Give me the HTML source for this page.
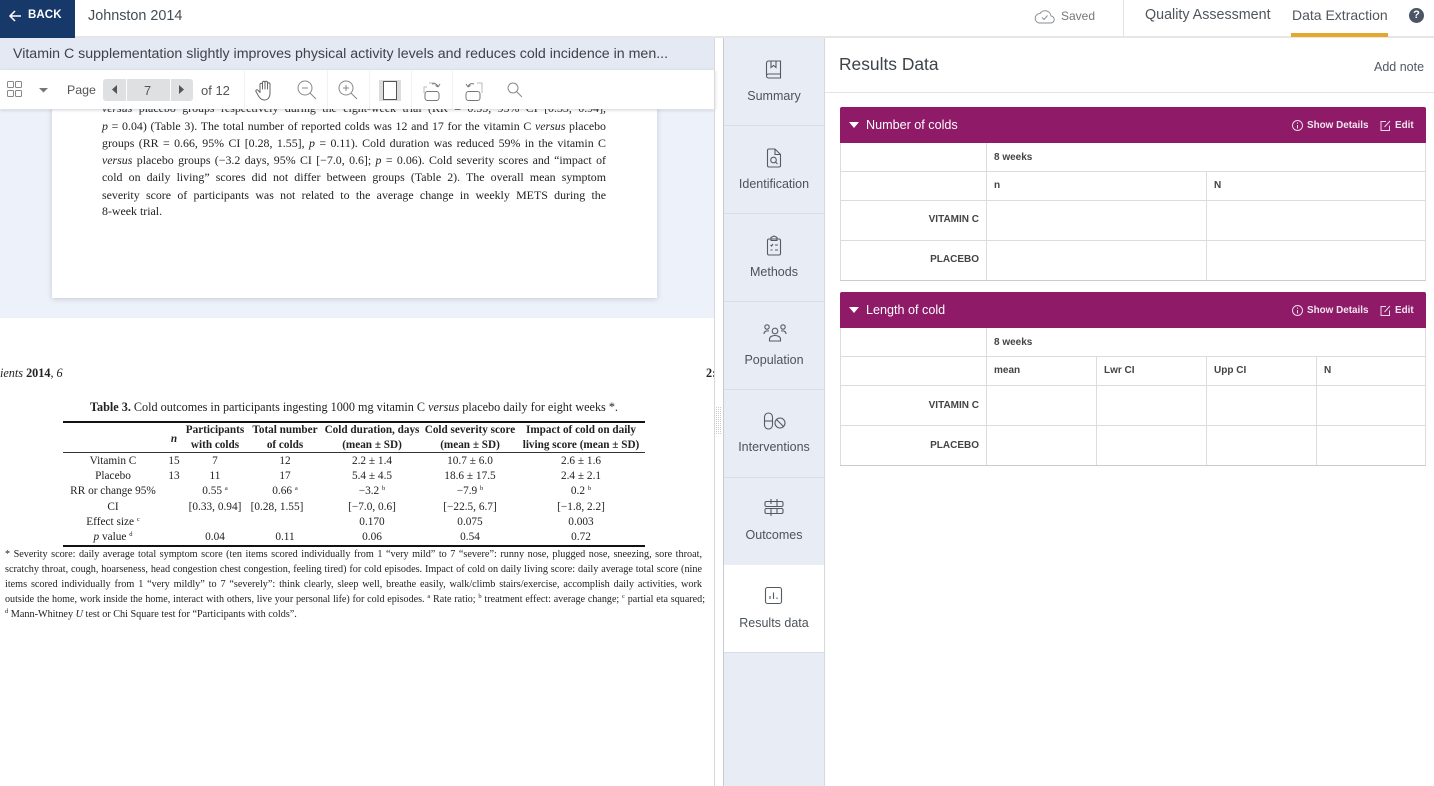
<!DOCTYPE html>
<html><head><meta charset="utf-8"><title>Johnston 2014</title>
<style>
*{box-sizing:border-box}
html,body{margin:0;padding:0;width:1434px;height:786px;overflow:hidden;background:#fff;font-family:"Liberation Sans",sans-serif;color:#444}
.a{position:absolute;white-space:nowrap}
.box{position:absolute}
svg{position:absolute;overflow:visible;fill:none}
.pdf{font-family:"Liberation Serif",serif;color:#222;font-size:11px;line-height:14px;filter:blur(.25px)}
.l{position:absolute;left:102px;width:504px;white-space:normal;text-align:justify;text-align-last:justify;font-size:11.900px;line-height:14px;height:14px}
.c{position:absolute;transform:translateX(-50%);white-space:nowrap;text-align:center;font-size:11.300px}
.f{position:absolute;left:5px;width:700px;white-space:normal;text-align:justify;text-align-last:justify;font-size:10.200px;line-height:14px;height:14px}
.c.th{font-weight:bold;font-size:11.200px}
sup{font-size:6.500px;line-height:0;vertical-align:4px}
.nav{position:absolute;left:724px;width:100px;height:88px;border-bottom:1px solid #d8dde8;text-align:center;font-size:12.500px;color:#4d5359}
.nav span{position:absolute;left:0;right:0;top:51px}
.nav svg{left:40px;top:21px;stroke:#555b61;stroke-width:1.100}
.hd{position:absolute;left:840px;width:586px;height:36px;background:#8e1a68;border-radius:2px 2px 0 0;color:#fff}
.hd .t{position:absolute;left:26px;top:11px;font-size:12.600px;white-space:nowrap}
.hd .s{position:absolute;top:13px;font-size:9.900px;font-weight:bold;white-space:nowrap;color:#f3e6ef}
.hd svg{stroke:#efdbe9;stroke-width:1}
.ln{position:absolute;background:#dcdcdc}
.cell{position:absolute;font-size:10px;font-weight:bold;color:#444;white-space:nowrap}
.lab{position:absolute;width:139px;left:840px;text-align:right;font-size:10px;font-weight:bold;color:#444}
</style></head><body>

<!-- PDF background -->
<div class="box" style="left:0;top:110px;width:714px;height:208px;background:#edf1f9"></div>
<div class="box" style="left:52px;top:100px;width:605px;height:198px;background:#fff;box-shadow:0 1px 5px rgba(120,130,150,.35)"></div>

<div class="pdf">
<div class="l" style="top:101px"><i>versus</i> placebo groups respectively during the eight-week trial (RR = 0.55, 95% CI [0.33, 0.94],</div>
<div class="l" style="top:119px"><i>p</i> = 0.04) (Table 3). The total number of reported colds was 12 and 17 for the vitamin C <i>versus</i> placebo</div>
<div class="l" style="top:136px">groups (RR = 0.66, 95% CI [0.28, 1.55], <i>p</i> = 0.11). Cold duration was reduced 59% in the vitamin C</div>
<div class="l" style="top:153px"><i>versus</i> placebo groups (−3.2 days, 95% CI [−7.0, 0.6]; <i>p</i> = 0.06). Cold severity scores and “impact of</div>
<div class="l" style="top:170px">cold on daily living” scores did not differ between groups (Table 2). The overall mean symptom</div>
<div class="l" style="top:188px">severity score of participants was not related to the average change in weekly METS during the</div>
<div class="a" style="left:102px;top:204px;font-size:11.900px">8-week trial.</div>

<div class="a" style="left:0;top:366px;font-size:12.200px"><i>ients</i> <b>2014</b>, <i>6</i></div>
<div class="a" style="left:706px;top:366px;font-size:12.200px;font-weight:bold">2:</div>
<div class="c" style="left:354px;top:400px;font-size:12.200px"><b>Table 3.</b> Cold outcomes in participants ingesting 1000 mg vitamin C <i>versus</i> placebo daily for eight weeks *.</div>
<div class="box" style="left:63px;top:421px;width:582px;height:2px;background:#111"></div>
<div class="box" style="left:63px;top:452px;width:582px;height:1px;background:#333"></div>
<div class="box" style="left:63px;top:545px;width:582px;height:2px;background:#111"></div>

<div class="c th" style="left:174px;top:432px"><i>n</i></div>
<div class="c th" style="left:215px;top:423px">Participants</div><div class="c th" style="left:215px;top:438px">with colds</div>
<div class="c th" style="left:285px;top:423px">Total number</div><div class="c th" style="left:285px;top:438px">of colds</div>
<div class="c th" style="left:372px;top:423px">Cold duration, days</div><div class="c th" style="left:372px;top:438px">(mean ± SD)</div>
<div class="c th" style="left:470px;top:423px">Cold severity score</div><div class="c th" style="left:470px;top:438px">(mean ± SD)</div>
<div class="c th" style="left:581px;top:423px">Impact of cold on daily</div><div class="c th" style="left:581px;top:438px">living score (mean ± SD)</div>

<div class="c" style="left:113px;top:454px">Vitamin C</div><div class="c" style="left:174px;top:454px">15</div><div class="c" style="left:215px;top:454px">7</div><div class="c" style="left:285px;top:454px">12</div><div class="c" style="left:372px;top:454px">2.2 ± 1.4</div><div class="c" style="left:470px;top:454px">10.7 ± 6.0</div><div class="c" style="left:581px;top:454px">2.6 ± 1.6</div>
<div class="c" style="left:113px;top:469px">Placebo</div><div class="c" style="left:174px;top:469px">13</div><div class="c" style="left:215px;top:469px">11</div><div class="c" style="left:285px;top:469px">17</div><div class="c" style="left:372px;top:469px">5.4 ± 4.5</div><div class="c" style="left:470px;top:469px">18.6 ± 17.5</div><div class="c" style="left:581px;top:469px">2.4 ± 2.1</div>
<div class="c" style="left:113px;top:484px">RR or change 95%</div><div class="c" style="left:215px;top:484px">0.55 <sup>a</sup></div><div class="c" style="left:285px;top:484px">0.66 <sup>a</sup></div><div class="c" style="left:372px;top:484px">−3.2 <sup>b</sup></div><div class="c" style="left:470px;top:484px">−7.9 <sup>b</sup></div><div class="c" style="left:581px;top:484px">0.2 <sup>b</sup></div>
<div class="c" style="left:113px;top:500px">CI</div><div class="c" style="left:215px;top:500px">[0.33, 0.94]</div><div class="c" style="left:277px;top:500px">[0.28, 1.55]</div><div class="c" style="left:372px;top:500px">[−7.0, 0.6]</div><div class="c" style="left:470px;top:500px">[−22.5, 6.7]</div><div class="c" style="left:581px;top:500px">[−1.8, 2.2]</div>
<div class="c" style="left:113px;top:515px">Effect size <sup>c</sup></div><div class="c" style="left:372px;top:515px">0.170</div><div class="c" style="left:470px;top:515px">0.075</div><div class="c" style="left:581px;top:515px">0.003</div>
<div class="c" style="left:113px;top:530px"><i>p</i> value <sup>d</sup></div><div class="c" style="left:215px;top:530px">0.04</div><div class="c" style="left:285px;top:530px">0.11</div><div class="c" style="left:372px;top:530px">0.06</div><div class="c" style="left:470px;top:530px">0.54</div><div class="c" style="left:581px;top:530px">0.72</div>

<div class="f" style="top:548px;width:697px">* Severity score: daily average total symptom score (ten items scored individually from 1 “very mild” to 7 “severe”: runny nose, plugged nose, sneezing, sore throat,</div>
<div class="f" style="top:563px;width:697px">scratchy throat, cough, hoarseness, head congestion chest congestion, feeling tired) for cold episodes. Impact of cold on daily living score: daily average total score (nine</div>
<div class="f" style="top:578px;width:697px">items scored individually from 1 “very mildly” to 7 “severely”: think clearly, sleep well, breathe easily, walk/climb stairs/exercise, accomplish daily activities, work</div>
<div class="f" style="top:593px;font-size:10.100px">outside the home, work inside the home, interact with others, live your personal life) for cold episodes. <sup>a</sup> Rate ratio; <sup>b</sup> treatment effect: average change; <sup>c</sup> partial eta squared;</div>
<div class="a" style="left:5px;top:608px;font-size:10.200px;line-height:14px"><sup>d</sup> Mann-Whitney <i>U</i> test or Chi Square test for “Participants with colds”.</div>
</div>

<!-- Title bar -->
<div class="box" style="left:0;top:38px;width:715px;height:33px;background:#e4e9f3"></div>
<div class="a" style="left:13px;top:46px;font-size:14.200px;color:#3d4349">Vitamin C supplementation slightly improves physical activity levels and reduces cold incidence in men...</div>

<!-- Toolbar -->
<div class="box" style="left:0;top:70px;width:715px;height:39px;background:#fff;box-shadow:0 1px 3px rgba(90,100,120,.3)"></div>
<svg style="left:0;top:70px" width="715" height="40" stroke="#f1f2f4"><path d="M244.500 0V39M327.500 0V39M369.500 0V39M411.500 0V39M452.500 0V39"/></svg>
<svg style="left:0;top:70px" width="40" height="40" stroke="#888" stroke-width="1"><rect x="7.500" y="11.500" width="6" height="6" rx="1"/><rect x="15.500" y="11.500" width="6" height="6" rx="1"/><rect x="7.500" y="20.500" width="6" height="6" rx="1"/><rect x="15.500" y="20.500" width="6" height="6" rx="1"/></svg>
<svg style="left:39px;top:88px" width="10" height="5"><path d="M0 0H9L4.500 4.500Z" fill="#777"/></svg>
<div class="a" style="left:67px;top:83px;font-size:12.400px;color:#555">Page</div>
<div class="box" style="left:103px;top:79px;width:23px;height:22px;background:#dfe0e1;border-radius:3px 0 0 3px"></div>
<div class="box" style="left:127px;top:79px;width:43px;height:22px;background:#dfe0e1"></div>
<div class="box" style="left:171px;top:79px;width:22px;height:22px;background:#dfe0e1;border-radius:0 3px 3px 0"></div>
<svg style="left:112px;top:85px" width="6" height="10"><path d="M5 0V9L0 4.500Z" fill="#555"/></svg>
<svg style="left:179px;top:85px" width="6" height="10"><path d="M0 0V9L5 4.500Z" fill="#555"/></svg>
<div class="a" style="left:144px;top:83px;font-size:12.800px;color:#555">7</div>
<div class="a" style="left:201px;top:83px;font-size:13px;color:#555">of 12</div>
<!-- hand -->
<svg style="left:254px;top:78px" width="22" height="24" stroke="#666" stroke-width="1" stroke-linejoin="round" stroke-linecap="round"><path d="M6 14V6.500a1.200 1.200 0 0 1 2.500 0V11M8.500 11V4.500a1.200 1.200 0 0 1 2.500 0V11M11 11V4.500a1.200 1.200 0 0 1 2.500 0V11M13.500 11V6a1.200 1.200 0 0 1 2.500 0V15c0 4-2 7-5.500 7-3 0-4.500-1.500-6-4L2 13.500c-.7-1.300 1-2.300 2-1.200L6 14.500"/></svg>
<!-- zoom out -->
<svg style="left:297px;top:80px" width="20" height="20" stroke="#888" stroke-width="1"><circle cx="8" cy="8" r="7"/><path d="M5 8H11M13 13L19 19"/></svg>
<!-- zoom in -->
<svg style="left:338px;top:80px" width="20" height="20" stroke="#888" stroke-width="1"><circle cx="8" cy="8" r="7"/><path d="M5 8H11M8 5V11M13 13L19 19"/></svg>
<!-- page -->
<div class="box" style="left:379px;top:80px;width:22px;height:21px;background:#dcdcdc"></div>
<div class="box" style="left:383px;top:81px;width:14px;height:19px;background:#fff;border:1.200px solid #555"></div>
<!-- rotate -->
<svg style="left:422px;top:81px" width="20" height="20" stroke="#777" stroke-width="1"><path d="M5 6H2V12M7 2H13" stroke="#bbb"/><path d="M10 3C13 2 15 3 16 6M16 6L18 3M16 6L13.500 4.500" /><rect x="3" y="10.500" width="14" height="9" rx="2.500"/></svg>
<svg style="left:464px;top:81px" width="20" height="20" stroke="#777" stroke-width="1"><path d="M13 2H18V12" stroke="#bbb"/><path d="M10 3C7 2 5 3 4 6M4 6L2 3M4 6L6.500 4.500"/><rect x="2" y="10.500" width="14" height="9" rx="2.500"/></svg>
<!-- search -->
<svg style="left:507px;top:82px" width="16" height="16" stroke="#888" stroke-width="1"><circle cx="6" cy="6" r="5"/><path d="M9.500 9.500L15 15"/></svg>

<!-- Top header -->
<div class="box" style="left:0;top:0;width:1434px;height:38px;background:#fff;border-bottom:2px solid #e6e6e6"></div>
<div class="box" style="left:0;top:0;width:75px;height:38px;background:#17396a"></div>
<svg style="left:9px;top:10px" width="13" height="12" stroke="#fff" stroke-width="1.500"><path d="M12 6H1.500M6 1L1 6L6 11"/></svg>
<div class="a" style="left:28px;top:9px;font-size:11.500px;font-weight:bold;color:#fff;letter-spacing:.1px">BACK</div>
<div class="a" style="left:88px;top:8px;font-size:14.400px;color:#444c54">Johnston 2014</div>
<svg style="left:1034px;top:9px" width="21" height="15" stroke="#8a8f94" stroke-width="1"><path d="M5 14H16.500A3.500 3.500 0 0 0 17 7A6 6 0 0 0 6 4.500A4.800 4.800 0 0 0 5 14Z"/><path d="M8 8.500L10 10.500L13.500 6.500"/></svg>
<div class="a" style="left:1061px;top:9px;font-size:12px;color:#777">Saved</div>
<div class="box" style="left:1123px;top:0;width:1px;height:37px;background:#e2e2e2"></div>
<div class="a" style="left:1145px;top:7px;font-size:14.300px;color:#50565c">Quality Assessment</div>
<div class="a" style="left:1292px;top:7px;font-size:14px;color:#50565c">Data Extraction</div>
<div class="box" style="left:1291px;top:33px;width:97px;height:4px;background:#e5a72e"></div>
<div class="a" style="left:1409px;top:8px;width:15px;height:15px;border-radius:50%;background:#4c5563;color:#fff;font-size:11px;font-weight:bold;text-align:center;line-height:15px">?</div>

<!-- Dividers -->
<div class="box" style="left:714px;top:38px;width:1px;height:748px;background:#d8d8d8"></div>
<svg style="left:716px;top:407px" width="6" height="28"><path d="M0.500 0V28M2.500 0V28M4.500 0V28" stroke="#ccc" stroke-dasharray="1 1"/></svg>

<!-- Side nav -->
<div class="box" style="left:723px;top:38px;width:102px;height:748px;background:#e8ecf5;border-left:1px solid #c9ccd2;border-right:1px solid #d5d8de"></div>
<div class="nav" style="top:38px"><svg width="20" height="22"><path d="M2.500 16V4A2 2 0 0 1 4.500 2H16.500V15H4.500A2 2 0 0 0 2.500 17V17A2 2 0 0 0 4.500 19H16.500V15M7 2V8.500L9.500 6.500L12 8.500V2"/></svg><span>Summary</span></div>
<div class="nav" style="top:126px"><svg width="20" height="22"><path d="M11 2H5A1.500 1.500 0 0 0 3.500 3.500V18.500A1.500 1.500 0 0 0 5 20H15A1.500 1.500 0 0 0 16.500 18.500V7.500ZM11 2V7.500H16.500"/><circle cx="9.500" cy="13" r="2.800"/><path d="M11.500 15L13.500 17"/></svg><span>Identification</span></div>
<div class="nav" style="top:214px"><svg width="20" height="22"><rect x="3.500" y="4" width="13" height="16" rx="1.500"/><path d="M7 4V2.500L10 1L13 2.500V4V5.500H7ZM6.500 10L7.500 11L9 9M11 10H14M6.500 15H8.500M11 15H14"/></svg><span>Methods</span></div>
<div class="nav" style="top:302px"><svg style="left:39px" width="24" height="22"><circle cx="12" cy="8" r="2.800"/><circle cx="4" cy="4" r="2.200"/><circle cx="20" cy="4" r="2.200"/><path d="M1 11C1 8.500 3 7.500 6 8M23 11C23 8.500 21 7.500 18 8M6.500 18V16C6.500 14 9 12.500 12 12.500S17.500 14 17.500 16V18Z"/></svg><span>Population</span></div>
<div class="nav" style="top:390px"><svg style="left:39px;top:20px" width="24" height="22"><rect x="1.500" y="3" width="8" height="16" rx="4"/><path d="M1.500 11H9.500"/><circle cx="17" cy="13" r="5"/><path d="M13.500 9.500L20.500 16.500"/></svg><span style="top:50px">Interventions</span></div>
<div class="nav" style="top:478px"><svg style="left:39px;top:20px" width="22" height="20"><rect x="2" y="3.500" width="18" height="5" rx="1.500"/><rect x="2" y="10.500" width="18" height="5" rx="1.500"/><path d="M8 1V6M14 1V8.500M8 10.500V18M14 10.500V15.500"/></svg><span style="top:50px">Outcomes</span></div>
<div class="nav" style="top:565px;background:#fff;height:88px;width:100px"><svg width="20" height="20"><rect x="1.500" y="1.500" width="16" height="16" rx="2"/><path d="M6 13V10M9.500 13V6.500M13 13V11.500"/></svg><span>Results data</span></div>

<!-- Right panel -->
<div class="a" style="left:839px;top:54px;font-size:17.400px;color:#3e4348">Results Data</div>
<div class="a" style="left:1374px;top:60px;font-size:12.500px;color:#4e5964">Add note</div>
<div class="box" style="left:825px;top:92px;width:609px;height:1px;background:#e4e4e4"></div>

<!-- Table 1 -->
<div class="hd" style="top:107px">
  <svg style="left:9px;top:15px" width="10" height="6"><path d="M0 0H10L5 6Z" fill="#fff" stroke="none"/></svg>
  <div class="t" style="top:11px">Number of colds</div>
  <svg style="left:452px;top:13px" width="11" height="11"><circle cx="5.500" cy="5.500" r="5"/><path d="M5.500 5V8.500M5.500 2.500V3.800"/></svg>
  <div class="s" style="left:467px">Show Details</div>
  <svg style="left:540px;top:13px" width="11" height="11"><path d="M6 1.500H1V10.500H9.500V5.500M4.500 7L10 1"/></svg>
  <div class="s" style="left:555px">Edit</div>
</div>
<div class="ln" style="left:840px;top:143px;width:1px;height:138px"></div>
<div class="ln" style="left:1425px;top:143px;width:1px;height:138px"></div>
<div class="ln" style="left:986px;top:143px;width:1px;height:137px"></div>
<div class="ln" style="left:1206px;top:171px;width:1px;height:109px"></div>
<div class="ln" style="left:840px;top:171px;width:586px;height:1px"></div>
<div class="ln" style="left:840px;top:200px;width:586px;height:1px"></div>
<div class="ln" style="left:840px;top:240px;width:586px;height:1px"></div>
<div class="ln" style="left:840px;top:280px;width:586px;height:1px;background:#ccc"></div>
<div class="cell" style="left:994px;top:152px">8 weeks</div>
<div class="cell" style="left:994px;top:180px">n</div>
<div class="cell" style="left:1214px;top:180px">N</div>
<div class="lab" style="top:214px">VITAMIN C</div>
<div class="lab" style="top:254px">PLACEBO</div>

<!-- Table 2 -->
<div class="hd" style="top:292px">
  <svg style="left:9px;top:15px" width="10" height="6"><path d="M0 0H10L5 6Z" fill="#fff" stroke="none"/></svg>
  <div class="t" style="top:11px">Length of cold</div>
  <svg style="left:452px;top:13px" width="11" height="11"><circle cx="5.500" cy="5.500" r="5"/><path d="M5.500 5V8.500M5.500 2.500V3.800"/></svg>
  <div class="s" style="left:467px">Show Details</div>
  <svg style="left:540px;top:13px" width="11" height="11"><path d="M6 1.500H1V10.500H9.500V5.500M4.500 7L10 1"/></svg>
  <div class="s" style="left:555px">Edit</div>
</div>
<div class="ln" style="left:840px;top:328px;width:1px;height:138px"></div>
<div class="ln" style="left:1425px;top:328px;width:1px;height:138px"></div>
<div class="ln" style="left:986px;top:328px;width:1px;height:137px"></div>
<div class="ln" style="left:1096px;top:356px;width:1px;height:109px"></div>
<div class="ln" style="left:1206px;top:356px;width:1px;height:109px"></div>
<div class="ln" style="left:1316px;top:356px;width:1px;height:109px"></div>
<div class="ln" style="left:840px;top:356px;width:586px;height:1px"></div>
<div class="ln" style="left:840px;top:385px;width:586px;height:1px"></div>
<div class="ln" style="left:840px;top:425px;width:586px;height:1px"></div>
<div class="ln" style="left:840px;top:465px;width:586px;height:1px;background:#ccc"></div>
<div class="cell" style="left:994px;top:337px">8 weeks</div>
<div class="cell" style="left:994px;top:365px">mean</div>
<div class="cell" style="left:1104px;top:365px">Lwr CI</div>
<div class="cell" style="left:1214px;top:365px">Upp CI</div>
<div class="cell" style="left:1324px;top:365px">N</div>
<div class="lab" style="top:400px">VITAMIN C</div>
<div class="lab" style="top:440px">PLACEBO</div>

</body></html>
